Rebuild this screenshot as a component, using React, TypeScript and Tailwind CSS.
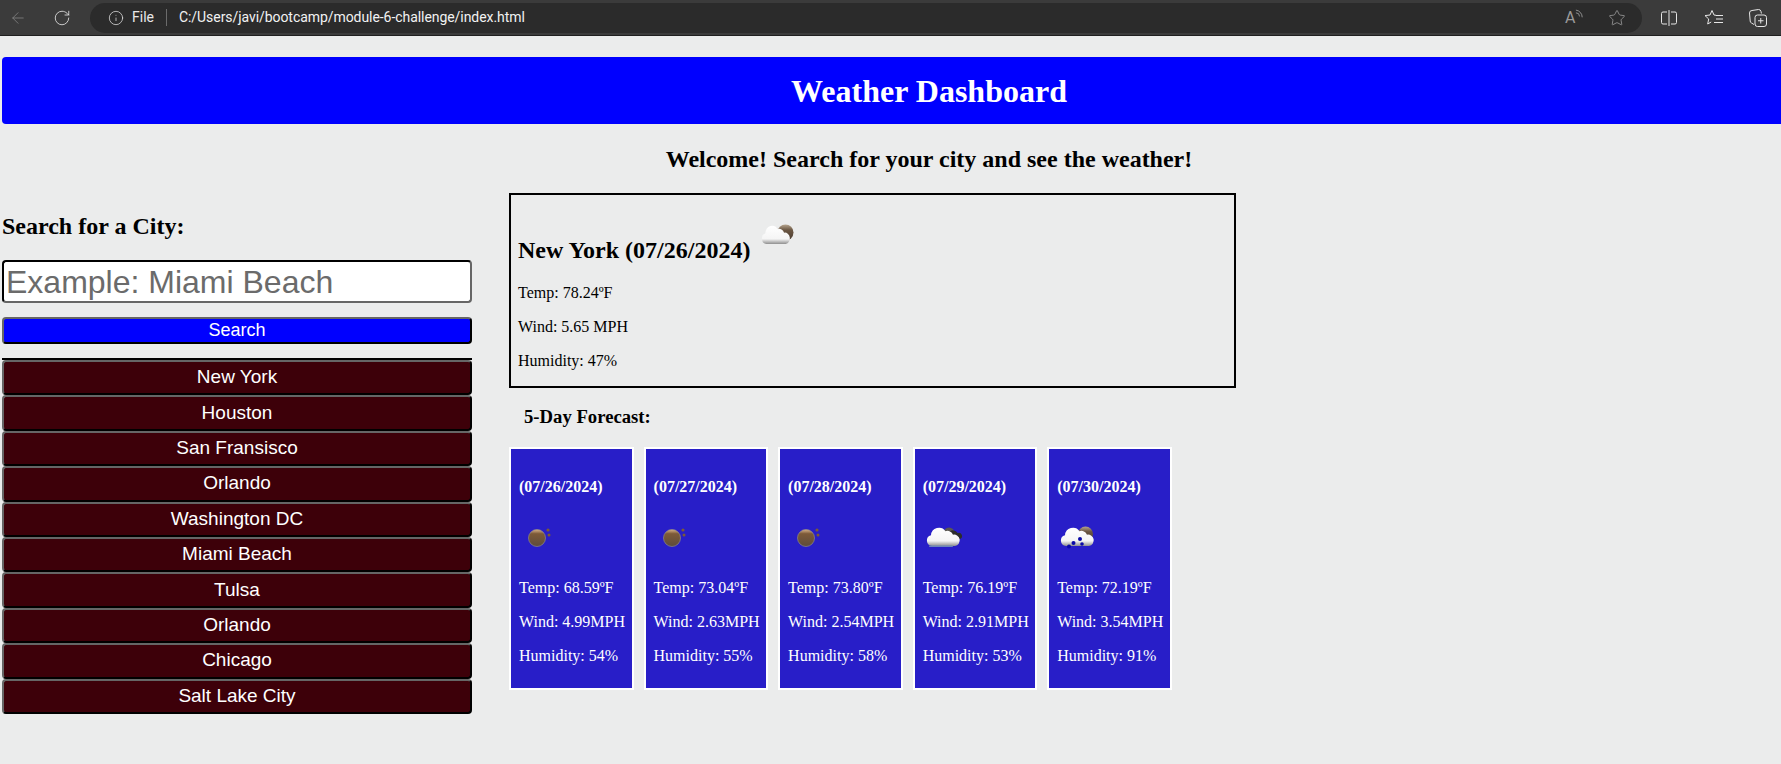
import { ArrowLeft, RotateCw, Info, Star } from 'lucide-react'

const cities = ['New York', 'Houston', 'San Fransisco', 'Orlando', 'Washington DC', 'Miami Beach', 'Tulsa', 'Orlando', 'Chicago', 'Salt Lake City']

const forecast = [
  { date: '07/26/2024', icon: 'sun', temp: '68.59', wind: '4.99', humidity: '54' },
  { date: '07/27/2024', icon: 'sun', temp: '73.04', wind: '2.63', humidity: '55' },
  { date: '07/28/2024', icon: 'sun', temp: '73.80', wind: '2.54', humidity: '58' },
  { date: '07/29/2024', icon: 'cloud', temp: '76.19', wind: '2.91', humidity: '53' },
  { date: '07/30/2024', icon: 'rain', temp: '72.19', wind: '3.54', humidity: '91' },
]

function SvgDefs() {
  return (
    <svg width="0" height="0" className="absolute">
      <defs>
        <linearGradient id="sunFill" x1="0" y1="0" x2="0" y2="1">
          <stop offset="0" stopColor="#d9b48a" />
          <stop offset="0.25" stopColor="#7d5a38" />
          <stop offset="1" stopColor="#5d4c3b" />
        </linearGradient>
        <linearGradient id="moonFill" x1="0" y1="0" x2="0" y2="1">
          <stop offset="0" stopColor="#b5a48e" />
          <stop offset="0.35" stopColor="#6a5642" />
          <stop offset="1" stopColor="#4a3c30" />
        </linearGradient>
        <linearGradient id="cloudFill" x1="0" y1="0" x2="0" y2="1">
          <stop offset="0" stopColor="#ffffff" />
          <stop offset="0.72" stopColor="#f5f5f5" />
          <stop offset="1" stopColor="#8f8f8f" />
        </linearGradient>
      </defs>
    </svg>
  )
}

const cloudPath = 'M13 36a5.5 5.5 0 0 1-1-10.8 8 8 0 0 1 14.5-4 6 6 0 0 1 7.5 3.5 5.5 5.5 0 0 1 2 11.3z'

function WeatherIcon({ type }: { type: string }) {
  if (type === 'sun') {
    return (
      <svg viewBox="0 0 50 50" className="w-[50px] h-[50px]">
        <circle cx="22" cy="28" r="8.5" fill="url(#sunFill)" stroke="#8f8a84" strokeWidth="0.7" />
        <circle cx="33" cy="20" r="1.6" fill="#7a5a38" />
        <circle cx="34" cy="25" r="1.5" fill="#7a5a38" />
      </svg>
    )
  }
  if (type === 'cloud') {
    return (
      <svg viewBox="0 0 50 50" className="w-[50px] h-[50px]">
        <circle cx="30" cy="23" r="5.5" fill="#5a5752" />
        <path d="M29 29a3.5 3.5 0 0 1 1-6.5 5 5 0 0 1 8.5 0.5 3 3 0 0 1 2.500 6z" fill="#2c2c2c" />
        <path d={cloudPath} fill="url(#cloudFill)" />
        <rect x="10" y="35.500" width="24" height="1.500" rx="0.7" fill="#6c86bb" />
      </svg>
    )
  }
  if (type === 'rain') {
    return (
      <svg viewBox="0 0 50 50" className="w-[50px] h-[50px]">
        <circle cx="32.5" cy="24" r="7.5" fill="url(#moonFill)" />
        <path d={cloudPath} fill="url(#cloudFill)" />
        <circle cx="16" cy="36.500" r="2" fill="#0a0aa8" />
        <circle cx="20.500" cy="33" r="2" fill="#0a0aa8" />
        <circle cx="27" cy="29" r="2" fill="#0a0aa8" />
        <circle cx="29" cy="34" r="1.800" fill="#0a0aa8" />
      </svg>
    )
  }
  return (
    <svg viewBox="0 0 50 50" className="w-[50px] h-[50px]">
      <circle cx="31.500" cy="24.500" r="8" fill="url(#moonFill)" />
      <path d={cloudPath} fill="url(#cloudFill)" transform="translate(1.2 0) scale(0.85 1)" />
    </svg>
  )
}

function BrowserBar() {
  return (
    <div className="h-[36px] bg-[#3b3b3b] border-b border-[#1f1f1f] flex items-center font-['Roboto',sans-serif] text-white">
      <ArrowLeft className="w-[18px] h-[18px] ml-[9px] text-[#8a8a8a]" strokeWidth={1} />
      <RotateCw className="w-[18px] h-[18px] ml-[26px] text-[#e6e6e6]" strokeWidth={1.1} />
      <div className="ml-[19px] w-[1552px] h-[30px] bg-[#2b2b2b] rounded-full flex items-center pl-[18px] pr-[16px]">
        <Info className="w-[16px] h-[16px] text-[#e6e6e6]" strokeWidth={1.1} />
        <span className="ml-[8px] text-[14px] text-[#e8e8e8]">File</span>
        <span className="ml-[12px] w-px h-[17px] bg-[#6b6b6b]" />
        <span className="ml-[12px] text-[14px] tracking-[-0.06px] text-[#f2f2f2]">C:/Users/javi/bootcamp/module-6-challenge/index.html</span>
        <span className="ml-auto mr-[19px] w-[24px] flex items-start text-[#9a9a9a]">
          <span className="text-[16px] leading-[18px]">A</span>
          <svg viewBox="0 0 10 14" className="w-[9px] h-[13px]" fill="none" stroke="currentColor" strokeWidth="1">
            <path d="M1 4a4 4 0 0 1 4 4" />
            <path d="M1 1a8 8 0 0 1 7 8" />
          </svg>
        </span>
        <Star className="w-[18px] h-[18px] text-[#9a9a9a]" strokeWidth={1.1} />
      </div>
      <svg viewBox="0 0 18 18" className="w-[18px] h-[18px] ml-[18px] text-[#e6e6e6]" fill="none" stroke="currentColor" strokeWidth="1">
        <path d="M7 3H3a1.500 1.500 0 0 0-1.500 1.500v9A1.500 1.500 0 0 0 3 15h4M11 3h4a1.500 1.500 0 0 1 1.500 1.500v9A1.500 1.500 0 0 1 15 15h-4" />
        <path d="M9 1v16" />
      </svg>
      <svg viewBox="0 0 20 18" className="w-[20px] h-[18px] ml-[26px] text-[#e6e6e6]" fill="none" stroke="currentColor" strokeWidth="1">
        <path d="M8 1.500l2 4.500 2 .3M8 1.500L6 6l-5 .6 3.700 3.400-1 5 3.500-2" />
        <path d="M12 6.500h7M12 10h7M10 13.500h9" />
      </svg>
      <svg viewBox="0 0 20 20" className="w-[20px] h-[20px] ml-[24px] text-[#e6e6e6]" fill="none" stroke="currentColor" strokeWidth="1">
        <path d="M6 16.500L3.500 15a2 2 0 0 1-1.300-2L1.500 5A2.500 2.500 0 0 1 4 2.500l6.500-1A2.500 2.500 0 0 1 13 3.500l.4 2" />
        <rect x="7" y="7" width="11.500" height="11.500" rx="2.500" />
        <path d="M12.750 10v5.500M10 12.750h5.500" />
      </svg>
    </div>
  )
}

export default function App() {
  return (
    <div className="w-full h-[764px] overflow-hidden bg-[#ebecec] font-['Liberation_Serif',serif] text-black">
      <SvgDefs />
      <BrowserBar />
      <div className="w-[1854px] ml-[2px]">
        <header className="mt-[21px] h-[67px] bg-[#0000ff] rounded-[4px] flex items-center justify-center">
          <h1 className="text-[32px] font-bold text-white">Weather Dashboard</h1>
        </header>
        <h2 className="mt-[21px] text-[24px] leading-[28px] font-bold text-center">Welcome! Search for your city and see the weather!</h2>
        <div className="flex mt-[20px]">
          <aside className="w-[470px] pt-[20px] font-['Liberation_Sans',sans-serif]">
            <h3 className="font-['Liberation_Serif',serif] font-bold text-[24px] leading-[27px]">Search for a City:</h3>
            <input
              placeholder="Example: Miami Beach"
              className="mt-[20px] block w-full h-[43px] bg-white rounded-[4px] border-2 border-t-black border-l-black border-r-[#666] border-b-[#666] pl-[2px] pr-[3px] text-[32px] placeholder:text-[#6b6b6b] outline-none"
            />
            <button className="mt-[14px] block w-full h-[27px] pb-[1px] bg-[#0000ff] text-white text-[18px] leading-none rounded-[4px] border-2 border-t-[#666] border-l-[#666] border-r-black border-b-black">Search</button>
            <div className="mt-[14px] h-[2px] bg-black" />
            <div className="flex flex-col">
              {cities.map((city, i) => (
                <button key={i} className="block w-full h-[35.4px] pb-[2px] bg-[#3d0009] text-white text-[19px] leading-none rounded-[4px] border-2 border-t-[#666] border-l-[#666] border-r-black border-b-black">{city}</button>
              ))}
            </div>
          </aside>
          <main className="ml-[37px]">
            <section className="w-[727px] h-[195px] border-2 border-black pl-[7px] pt-[29px]">
              <div className="flex items-start h-[47px]">
                <h2 className="text-[24px] leading-[28px] font-bold mt-[12px]">New York (07/26/2024)</h2>
                <div className="-mt-[16px] ml-[4px]"><WeatherIcon type="moon" /></div>
              </div>
              <p className="text-[16px] leading-[18px] mt-[13px]">Temp: 78.24ºF</p>
              <p className="text-[16px] leading-[18px] mt-[16px]">Wind: 5.65 MPH</p>
              <p className="text-[16px] leading-[18px] mt-[16px]">Humidity: 47%</p>
            </section>
            <h3 className="ml-[15px] mt-[18px] text-[18.7px] leading-[21px] font-bold">5-Day Forecast:</h3>
            <div className="flex gap-[10px] mt-[20px]">
              {forecast.map((day) => (
                <div key={day.date} className="h-[243px] bg-[#281ec8] border-2 border-white text-white pl-[8px] pr-[6.5px] pt-[29px]">
                  <div className="text-[16px] leading-[18px] font-bold">({day.date})</div>
                  <div className="mt-[14px] h-[50px] -ml-[4px] flex items-center"><WeatherIcon type={day.icon} /></div>
                  <p className="text-[16px] leading-[18px] mt-[19px]">Temp: {day.temp}ºF</p>
                  <p className="text-[16px] leading-[18px] mt-[16px]">Wind: {day.wind}MPH</p>
                  <p className="text-[16px] leading-[18px] mt-[16px]">Humidity: {day.humidity}%</p>
                </div>
              ))}
            </div>
          </main>
        </div>
      </div>
    </div>
  )
}
